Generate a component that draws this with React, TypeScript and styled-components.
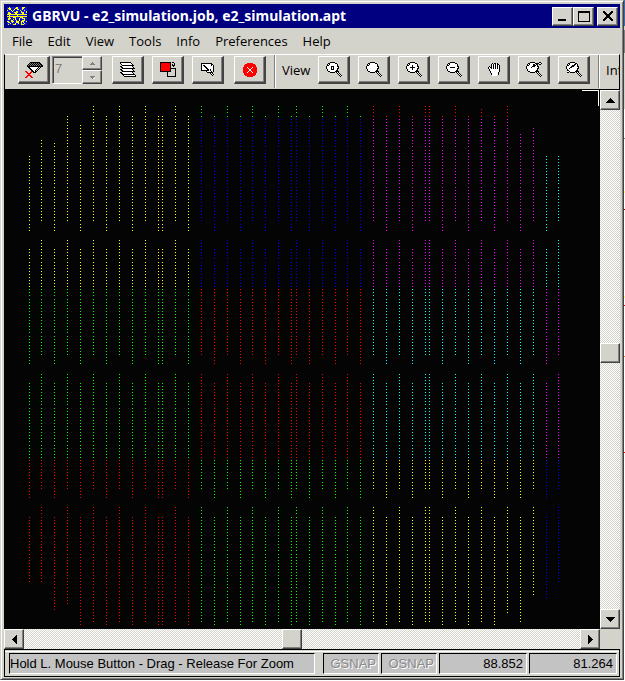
import React from "react";
import styled, { createGlobalStyle, css } from "styled-components";

const face = "#d4d3cb";
const uiFont = '"Open Sans", "Noto Sans", sans-serif';
const sysFont = '"Liberation Sans", Arial, sans-serif';

const GlobalStyle = createGlobalStyle`
  * { box-sizing: border-box; }
  html, body { margin: 0; background: #fff; }
  button, input { font: inherit; color: inherit; padding: 0; margin: 0; border-radius: 0; }
`;

const raised = css`
  border: 1px solid;
  border-color: #fff #444 #444 #fff;
  box-shadow: inset -1px -1px 0 #808080;
  background: ${face};
`;

const Desktop = styled.div`
  display: flex;
  height: 100vh;
  min-height: 400px;
  padding-bottom: 1px;
  background: #fff;
`;

const Backdrop = styled.div`
  flex: none;
  width: 1px;
  background: linear-gradient(
    #3a6ea5 0 26px, ${face} 26px 30px, #808080 30px 53px, ${face} 53px 109px,
    #fff 109px 138px, #808080 138px 139px, #fff 139px 191px, #ff8 191px 193px,
    #fff 193px 209px, #800000 209px 210px, #fff 210px 296px, #ff8 296px 298px,
    #fff 298px 305px, #d00020 305px 306px, #fff 306px 356px, #e08030 356px 357px,
    #fff 357px 452px, #f00 452px 453px, #fff 453px
  );
`;

const Frame = styled.main`
  flex: 1;
  min-width: 0;
  display: flex;
  flex-direction: column;
  padding: 2px 3px 2px 2px;
  background: ${face};
  border: 1px solid ${face};
  border-right: 1px solid #404040;
  border-bottom: 1px solid #404040;
  box-shadow: inset 1px 1px 0 #fff, inset -1px -1px 0 #808080;
`;

const Body = styled.div`
  flex: 1;
  min-height: 0;
  display: flex;
  flex-direction: column;
  margin: 1px 0 0 1px;
`;

const TitleBar = styled.header`
  flex: none;
  height: 24px;
  display: flex;
  align-items: center;
  padding: 0 2px 0 3px;
  background: #000080;
  color: #fff;
`;

const Title = styled.h1`
  flex: 1;
  min-width: 0;
  overflow: hidden;
  margin: 0 0 0 5px;
  font: 700 14px/20px "Noto Sans", sans-serif;
  white-space: nowrap;
`;

const Caption = styled.button<{ $apart?: boolean }>`
  ${raised}
  display: grid;
  place-items: center;
  width: 21px;
  height: 19px;
  margin-left: ${(p) => (p.$apart ? 3 : 0)}px;
`;

const MenuBar = styled.nav`
  flex: none;
  height: 26px;
  display: flex;
  align-items: center;
  gap: 15px;
  padding-left: 8px;
  font: 13px/20px ${uiFont};
`;

const MenuItem = styled.button`
  border: 0;
  background: none;
`;

const ToolBar = styled.div`
  flex: none;
  height: 36px;
  display: flex;
  align-items: flex-start;
  padding-left: 13px;
  overflow: hidden;
  border: 1px solid #000;
  border-top: 1px solid #fff;
  border-bottom: 1px solid #000;
  box-shadow: inset 0 1px 0 ${face};
  font: 13px/28px ${uiFont};
`;

const ToolGroup = styled.div<{ $before: number }>`
  flex: none;
  display: flex;
  gap: 8px;
  margin: 1px 0 0 ${(p) => p.$before}px;
`;

const Tool = styled.button`
  ${raised}
  border-width: 1px 2px 2px 1px;
  flex: none;
  display: grid;
  place-items: center;
  width: 32px;
  height: 28px;
`;

const Divider = styled.div`
  flex: none;
  width: 2px;
  height: 33px;
  margin: 0 0 0 8px;
  border-left: 1px solid #808080;
  border-right: 1px solid #fff;
`;

const ToolLabel = styled.span`
  flex: none;
  margin-left: 6px;
  width: 36px;
  padding-top: 1px;
`;

const Spinner = styled.div`
  flex: none;
  display: flex;
  width: 50px;
  height: 28px;
  margin: 1px 0 0 2px;
`;

const SpinnerInput = styled.input`
  flex: 1;
  min-width: 0;
  height: 28px;
  padding: 0 0 4px 2px;
  border: 1px solid #808080;
  border-right: 0;
  border-bottom-color: #fff;
  box-shadow: inset 1px 1px 0 #404040;
  background: ${face};
  color: #808080;
  font: 13px/16px ${sysFont};
`;

const SpinnerKeys = styled.div`
  display: flex;
  flex-direction: column;
`;

const SpinnerKey = styled.button`
  ${raised}
  display: grid;
  place-items: center;
  width: 20px;
  height: 14px;
`;

const Viewport = styled.div`
  flex: 1;
  min-height: 0;
  display: grid;
  grid-template: minmax(0, 1fr) 20px / minmax(0, 1fr) 20px;
`;

const Plot = styled.svg`
  display: block;
  width: 100%;
  height: 100%;
  background: #040404;
`;

const ScrollBar = styled.div<{ $vertical?: boolean }>`
  display: flex;
  flex-direction: ${(p) => (p.$vertical ? "column" : "row")};
  background: repeating-conic-gradient(#fff 0 25%, ${face} 0 50%) 0 0 / 2px 2px;
`;

const ScrollKey = styled.button`
  ${raised}
  border-right-color: #404040;
  flex: none;
  display: grid;
  place-items: center;
  width: 20px;
  height: 20px;
`;

const ScrollSpace = styled.div<{ $share: number }>`
  flex: ${(p) => p.$share} 1 0;
`;

const StatusBar = styled.footer`
  flex: none;
  height: 28px;
  display: flex;
  align-items: center;
  gap: 2px;
  padding: 1px 2px 0 4px;
  border: 1px solid #000;
  box-shadow: inset 0 1px 0 ${face}, inset 0 2px 0 #fff;
  font: 13px/20px ${sysFont};
  white-space: nowrap;
`;

const Pane = styled.output<{ $width?: number; $off?: boolean }>`
  flex: ${(p) => (p.$width ? `none` : "1 1 0")};
  width: ${(p) => (p.$width ? `${p.$width}px` : "auto")};
  min-width: 0;
  height: 21px;
  overflow: hidden;
  padding: 0 ${(p) => (p.$off ? 2 : 3)}px 0 ${(p) => (p.$width ? 3 : 0)}px;
  margin-right: ${(p) => (p.$width ? 0 : 6)}px;
  border: 1px solid;
  border-color: #000 #fff #fff #000;
  background: #c3c3c3;
  text-align: ${(p) => (p.$width ? "right" : "left")};
  color: ${(p) => (p.$off ? "#8a8a8a" : "#000")};
  text-shadow: ${(p) => (p.$off ? "1px 1px 0 #fff" : "none")};
`;

/* Pixel icons: one character per pixel. */
const inks: Record<string, string> = {
  "#": "#000", o: "#fff", r: "#ff0000", y: "#ffff00", b: "#1018d8", g: "#808080", w: "#fff",
};

function Pixels({ rows }: { rows: string[] }) {
  const paths: Record<string, string> = {};
  rows.forEach((row, y) =>
    [...row].forEach((c, x) => {
      if (inks[c]) paths[c] = (paths[c] || "") + `M${x} ${y}h1v1h-1z`;
    })
  );
  return (
    <svg width={rows[0].length} height={rows.length} shapeRendering="crispEdges" aria-hidden="true">
      {Object.entries(paths).map(([c, d]) => <path key={c} d={d} fill={inks[c]} />)}
    </svg>
  );
}

const lens = [
  "....#####.......",
  "..##ooooo##.....",
  ".#o#ooooooo#....",
  ".##oooooooo#....",
  "#oooooooooo##...",
  "#ooooooooooo#...",
  "#oooooooooo##...",
  ".#ooooooooo#....",
  ".#oooooooo##....",
  "..##ooooo####...",
  "....#####.#o#...",
  "...........#o#..",
  "............#o#.",
  ".............#o#",
  "..............#.",
];

const overlay = (base: string[], top: string[], dx: number, dy: number) =>
  base.map((row, y) =>
    [...row].map((c, x) => {
      const t = top[y - dy]?.[x - dx];
      return t && t !== "." ? t : c;
    }).join("")
  );

const icons: Record<string, string[]> = {
  aperture: [
    ".....##########...",
    "....#g#g#g#g#g##..",
    "...#g#g#g#g#g#g##.",
    "..#g#g#g#g#g#g#g##",
    "..################",
    "...##oooooooo#.#..",
    "....##oooooo#.#...",
    ".....##oooo#.#....",
    "......##oo#.#.....",
    "rr....r##o##......",
    ".rr..rr.###.......",
    "..rrrr............",
    "...rr.............",
    "..rrrr............",
    ".rr..rr...........",
    "rr....rr..........",
  ],
  layers: [
    "###########.....",
    "#oooooooooo#....",
    ".#oooooooooo#...",
    "..############..",
    "##oooooooooo#...",
    ".##oooooooooo#..",
    "..#############.",
    "##oooooooooo#...",
    ".##oooooooooo#..",
    "..#############.",
    "##oooooooooo#...",
    ".##oooooooooo#..",
    "..#############.",
    "...#ooooooooooo#",
    "....############",
  ],
  colors: [
    "###########.##..",
    "#rrrrrrrrr#...#.",
    "#rrrrrrrrr#.#.#.",
    "#rrrrrrrrr#.###.",
    "#rrrrrrrrr#..#..",
    "#rrrrrrrrr#.....",
    "#rrrrrrrrr######",
    "#rrrrrrrrr#....#",
    "#rrrrrrrrr#....#",
    "###########....#",
    ".......#.......#",
    ".......#.......#",
    ".......#.......#",
    ".......#.......#",
    ".......#########",
  ],
  select: [
    "###########..",
    "#ooooooooo##.",
    "#o##oooooo#o#",
    "#oo##ooooooo#",
    "#ooo##oooooo#",
    "#oooo##ooooo#",
    "#ooooo##o#oo#",
    "########o#oo#",
    ".....#oooo#o#",
    "......######.",
    ".........#o#.",
    "..........#o#",
    "...........#.",
  ],
  stop: [
    "....rrrrrr....",
    "..rrrrrrrrrr..",
    ".rrrrrrrrrrrr.",
    ".rrrrrrrrrrrr.",
    "rrrrorrrrorrrr",
    "rrrrrorrorrrrr",
    "rrrrrroorrrrrr",
    "rrrrrroorrrrrr",
    "rrrrrorrorrrrr",
    "rrrrorrrrorrrr",
    ".rrrrrrrrrrrr.",
    ".rrrrrrrrrrrr.",
    "..rrrrrrrrrr..",
    "....rrrrrr....",
  ],
  zoomBox: overlay(lens, [".###.", ".#o#.", ".#o#.", ".###."], 4, 4),
  zoomFull: lens,
  zoomIn: overlay(lens, ["..#..", "..#..", "#####", "..#..", "..#.."], 4, 3),
  zoomOut: overlay(lens, ["#####"], 4, 5),
  hand: [
    "....#.##.#..",
    "...#o#o#o##.",
    "...#o#o#o#o#",
    ".#.#o#o#o#o#",
    "#o##o#o#o#o#",
    "#oo#o#o#o#o#",
    ".#ooooooooo#",
    ".#ooooooooo#",
    "..#oooooooo#",
    "..#ooooooo#.",
    "...#oooooo#.",
    "...#oooooo#.",
    "....ooooo...",
  ],
  zoomPrev: overlay(lens, ["..........##.", ".......###oo#", "....##.#..##.", "....###......", "...###.......", "..#.........."], 3, 0),
  zoomPan: overlay(lens, [".......##", ".....###.", "....###..", "...##....", "..#......", "........", "##.......", "oo#......", "##......."], 1, 2),
  app: [
    "bbybbbbbbyybbbbyyybb",
    "byyybbbbyyybbbbyybbb",
    "bbyybbbybbyybbbybbbb",
    "ybbbybybbbbbbybbbybb",
    "bbbbbybbbyybbbybbbby",
    "byybbbbyyyybbbyyybby",
    "byyybbbbyybbbbbyybbb",
    "yyyyyyyyyyyyyyyyyyyy",
    "bbybbbbbbbybbbbbbbbb",
    "yyyyyyyyyyyyyyyyyyyy",
    "bbybbbyyybbbbyyybbbb",
    "byyybbbbybbbybbyyybb",
    "byybbbybybbbybbbbybb",
    "bbbbyybbbybbybbyyybb",
    "yybbyyybbyyybbyyybby",
    "byybbybbbyyybbybybbb",
    "bbbybbbbybbybbybbybb",
    "bybbbbyyybbbbbyyybbb",
  ],
  minimize: [".........", ".........", ".........", ".........", ".........", ".........", ".........", "########.", "########."],
  maximize: ["############", "############", ...Array(8).fill("#..........#"), "############"],
  close: ["##......##", "###....###", ".###..###.", "..######..", "...####...", "...####...", "..######..", ".###..###.", "###....###", "##......##"],
  up: ["....#....", "...###...", "..#####..", ".#######.", "#########"],
  down: ["#########", ".#######.", "..#####..", "...###...", "....#...."],
  left: ["....#", "...##", "..###", ".####", "#####", ".####", "..###", "...##", "....#"],
  right: ["#....", "##...", "###..", "####.", "#####", "####.", "###..", "##...", "#...."],
  spinUp: ["..g..", ".ggg.", "ggggg"],
  spinDown: ["ggggg", ".gggw", "..gw."],
};

/* Aperture flashes: each column is a run of single-pixel exposures. */
const run = (start: number, count: number) => Array.from({ length: count }, (_, i) => start + i * 3);

const exposures = [
  [...run(106, 3), ...run(116, 11), ...run(150, 12), ...run(187, 12), ...run(224, 3)],
  [...run(240, 7), ...run(262, 12), ...run(299, 12), ...run(336, 10)],
  [...run(374, 11), ...run(408, 12), ...run(445, 12), ...run(482, 6)],
  [...run(507, 3), ...run(517, 12), ...run(554, 12), ...run(591, 12)],
];

const earlySpans = [[106, 220], [240, 354], [374, 488], [507, 621]];
const lateSpans = [[116, 230], [249, 363], [383, 497], [517, 624]];

const earlyColumns = [41, 67, 93, 119, 145, 175, 201, 227, 252, 278, 296, 322, 347, 373, 399, 425, 429, 455, 481, 507, 533, 558];
const lateColumns = [29, 54, 80, 106, 132, 158, 162, 188, 214, 240, 265, 291, 309, 335, 360, 386, 412, 442, 468, 494, 520, 546];

const firstExposure: Record<number, number> = {
  29: 156, 41: 140, 54: 143, 67: 116, 80: 125, 481: 109, 520: 134, 533: 128, 546: 156, 558: 156,
};
const lastExposure: Record<number, number> = {
  29: 581, 41: 581, 54: 609, 67: 603, 507: 612, 520: 621, 533: 594, 546: 597, 558: 581,
};

const zones = [
  { until: 190, colors: ["#ffff00", "#ffff00", "#00ff00", "#ff0000"] },
  { until: 362, colors: ["#00ff00", "#0000ff", "#ff0000", "#00ff00"] },
  { until: 540, colors: ["#ff0000", "#ff00ff", "#00ffff", "#ffff00"] },
  { until: 600, colors: ["#00ffff", "#00ffff", "#ff00ff", "#0000ff"] },
];

const flashes: Record<string, string> = {};
const addColumn = (x: number, spans: number[][]) =>
  exposures.forEach((ys, block) => {
    const from = block === 0 ? firstExposure[x] ?? spans[0][0] : spans[block][0];
    const to = block === 3 ? lastExposure[x] ?? spans[3][1] : spans[block][1];
    ys.filter((y) => y >= from && y <= to).forEach((y) => {
      const band = y < 118 ? 0 : y < 288 ? 1 : y < 459 ? 2 : 3;
      const color = zones.find((z) => x < z.until)!.colors[band];
      flashes[color] = (flashes[color] || "") + `M${x - 4} ${y - 90}h1v1h-1z`;
    });
  });
earlyColumns.forEach((x) => addColumn(x, earlySpans));
lateColumns.forEach((x) => addColumn(x, lateSpans));

const menus = ["File", "Edit", "View", "Tools", "Info", "Preferences", "Help"];
const ToolButton = ({ icon, label }: { icon: string; label: string }) => (
  <Tool aria-label={label}><Pixels rows={icons[icon]} /></Tool>
);

export default function App() {
  return (
    <>
      <GlobalStyle />
      <Desktop>
        <Frame>
          <Body>
            <TitleBar>
              <Pixels rows={icons.app} />
              <Title>GBRVU - e2_simulation.job, e2_simulation.apt</Title>
              <Caption aria-label="Minimize"><Pixels rows={icons.minimize} /></Caption>
              <Caption aria-label="Maximize"><Pixels rows={icons.maximize} /></Caption>
              <Caption aria-label="Close" $apart><Pixels rows={icons.close} /></Caption>
            </TitleBar>
            <MenuBar>
              {menus.map((m) => <MenuItem key={m}>{m}</MenuItem>)}
            </MenuBar>
            <ToolBar>
              <ToolGroup $before={0}>
                <ToolButton icon="aperture" label="Aperture" />
              </ToolGroup>
              <Spinner>
                <SpinnerInput aria-label="Layer number" defaultValue="7" disabled />
                <SpinnerKeys>
                  <SpinnerKey aria-label="Next layer"><Pixels rows={icons.spinUp} /></SpinnerKey>
                  <SpinnerKey aria-label="Previous layer"><Pixels rows={icons.spinDown} /></SpinnerKey>
                </SpinnerKeys>
              </Spinner>
              <ToolGroup $before={10}>
                <ToolButton icon="layers" label="Layers" />
                <ToolButton icon="colors" label="Colors" />
                <ToolButton icon="select" label="Select" />
              </ToolGroup>
              <ToolGroup $before={10}>
                <ToolButton icon="stop" label="Stop" />
              </ToolGroup>
              <Divider />
              <ToolLabel>View</ToolLabel>
              <ToolGroup $before={0}>
                <ToolButton icon="zoomBox" label="Zoom window" />
                <ToolButton icon="zoomFull" label="Zoom full" />
                <ToolButton icon="zoomIn" label="Zoom in" />
                <ToolButton icon="zoomOut" label="Zoom out" />
                <ToolButton icon="hand" label="Pan" />
                <ToolButton icon="zoomPrev" label="Zoom previous" />
                <ToolButton icon="zoomPan" label="Zoom measured" />
              </ToolGroup>
              <Divider />
              <ToolLabel>Info</ToolLabel>
            </ToolBar>
            <Viewport>
              <Plot role="img" aria-label="Aperture flashes" shapeRendering="crispEdges">
                {Object.entries(flashes).map(([c, d]) => <path key={c} d={d} fill={c} />)}
                <path d="M578 0h17v1h-17zM594 1h1v15h-1z" fill="#fff" />
              </Plot>
              <ScrollBar $vertical>
                <ScrollKey aria-label="Scroll up"><Pixels rows={icons.up} /></ScrollKey>
                <ScrollSpace $share={233} />
                <ScrollKey aria-label="Vertical position" />
                <ScrollSpace $share={246} />
                <ScrollKey aria-label="Scroll down"><Pixels rows={icons.down} /></ScrollKey>
              </ScrollBar>
              <ScrollBar>
                <ScrollKey aria-label="Scroll left"><Pixels rows={icons.left} /></ScrollKey>
                <ScrollSpace $share={258} />
                <ScrollKey aria-label="Horizontal position" />
                <ScrollSpace $share={279} />
                <ScrollKey aria-label="Scroll right"><Pixels rows={icons.right} /></ScrollKey>
              </ScrollBar>
            </Viewport>
            <StatusBar>
              <Pane>Hold L. Mouse Button - Drag - Release For Zoom</Pane>
              <Pane $width={56} $off>GSNAP</Pane>
              <Pane $width={56} $off>OSNAP</Pane>
              <Pane $width={88}>88.852</Pane>
              <Pane $width={88}>81.264</Pane>
            </StatusBar>
          </Body>
        </Frame>
        <Backdrop />
      </Desktop>
    </>
  );
}
